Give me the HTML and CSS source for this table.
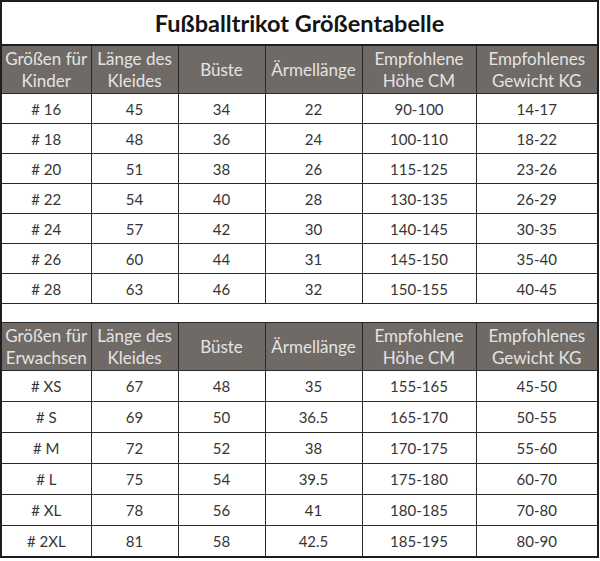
FILE: index.html
```html
<!DOCTYPE html>
<html lang="de">
<head>
<meta charset="utf-8">
<title>Fußballtrikot Größentabelle</title>
<link rel="stylesheet" href="styles.css">
</head>
<body>
<table class="size-table">
  <colgroup>
    <col class="c1"><col class="c2"><col class="c3"><col class="c4"><col class="c5"><col class="c6">
  </colgroup>
  <tr class="title-row"><td colspan="6">Fußballtrikot Größentabelle</td></tr>
  <tr class="head-row">
    <th>Größen für<br>Kinder</th><th>Länge des<br>Kleides</th><th>Büste</th><th>Ärmellänge</th><th>Empfohlene<br>Höhe CM</th><th>Empfohlenes<br>Gewicht KG</th>
  </tr>
  <tr class="kid"><td># 16</td><td>45</td><td>34</td><td>22</td><td>90-100</td><td>14-17</td></tr>
  <tr class="kid"><td># 18</td><td>48</td><td>36</td><td>24</td><td>100-110</td><td>18-22</td></tr>
  <tr class="kid"><td># 20</td><td>51</td><td>38</td><td>26</td><td>115-125</td><td>23-26</td></tr>
  <tr class="kid"><td># 22</td><td>54</td><td>40</td><td>28</td><td>130-135</td><td>26-29</td></tr>
  <tr class="kid"><td># 24</td><td>57</td><td>42</td><td>30</td><td>140-145</td><td>30-35</td></tr>
  <tr class="kid"><td># 26</td><td>60</td><td>44</td><td>31</td><td>145-150</td><td>35-40</td></tr>
  <tr class="kid"><td># 28</td><td>63</td><td>46</td><td>32</td><td>150-155</td><td>40-45</td></tr>
  <tr class="gap-row"><td colspan="6"></td></tr>
  <tr class="head-row">
    <th>Größen für<br>Erwachsen</th><th>Länge des<br>Kleides</th><th>Büste</th><th>Ärmellänge</th><th>Empfohlene<br>Höhe CM</th><th>Empfohlenes<br>Gewicht KG</th>
  </tr>
  <tr class="adult"><td># XS</td><td>67</td><td>48</td><td>35</td><td>155-165</td><td>45-50</td></tr>
  <tr class="adult"><td># S</td><td>69</td><td>50</td><td>36.5</td><td>165-170</td><td>50-55</td></tr>
  <tr class="adult"><td># M</td><td>72</td><td>52</td><td>38</td><td>170-175</td><td>55-60</td></tr>
  <tr class="adult"><td># L</td><td>75</td><td>54</td><td>39.5</td><td>175-180</td><td>60-70</td></tr>
  <tr class="adult"><td># XL</td><td>78</td><td>56</td><td>41</td><td>180-185</td><td>70-80</td></tr>
  <tr class="adult"><td># 2XL</td><td>81</td><td>58</td><td>42.5</td><td>185-195</td><td>80-90</td></tr>
</table>
</body>
</html>
```

FILE: styles.css
```css
html, body {
  margin: 0;
  padding: 0;
  background: #ffffff;
}

.size-table {
  border-collapse: collapse;
  table-layout: fixed;
  width: 599px;
  margin: 0;
  font-family: Lato, "Open Sans", sans-serif;
  color: #353535;
  border: 2px solid #1e1e1e;
}

.c1 { width: 90px; }
.c2 { width: 87px; }
.c3 { width: 87px; }
.c4 { width: 97px; }
.c5 { width: 114px; }
.c6 { width: 122px; }

.size-table td,
.size-table th {
  border: 1px solid #2a2a2a;
  text-align: center;
  vertical-align: middle;
  padding: 0;
}

.title-row td {
  height: 42px;
  font-weight: 700;
  font-size: 23.5px;
  color: #151515;
  border-bottom: 2px solid #1e1e1e;
}

.head-row th {
  height: 47px;
  background: #6f6a66;
  color: #e4e4e4;
  font-weight: 400;
  font-size: 17px;
  line-height: 22px;
}

.kid td {
  height: 29px;
  font-size: 15px;
}

.adult td {
  height: 30px;
  font-size: 15px;
}

.gap-row td {
  height: 18px;
  border-left: none;
  border-right: none;
}
```
